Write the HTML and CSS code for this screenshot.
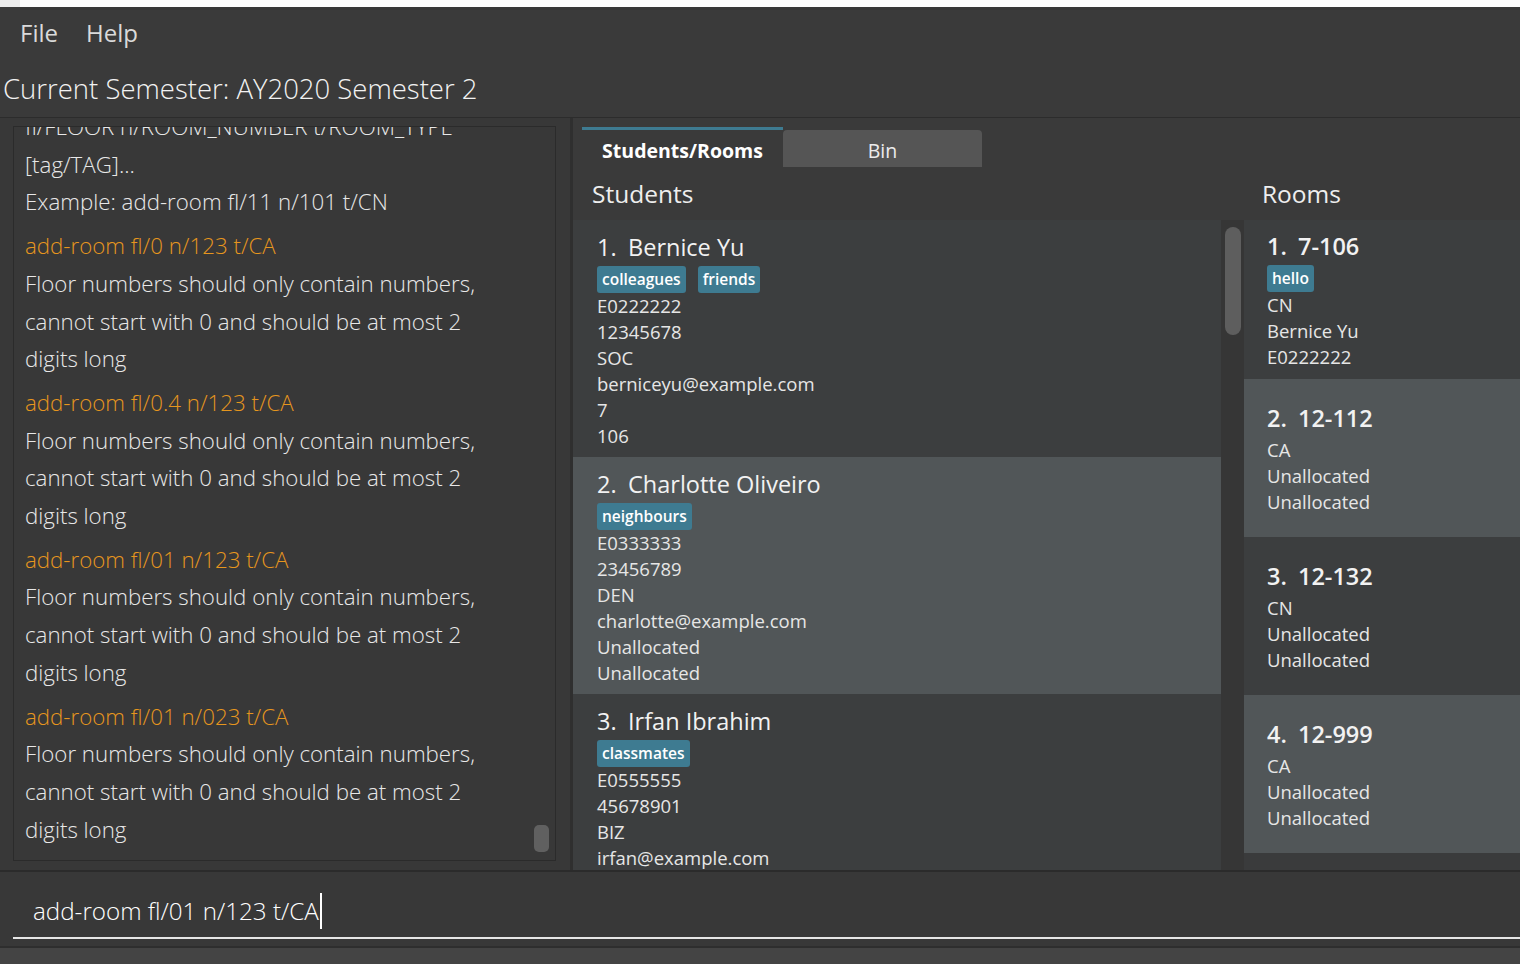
FILE: index.html
```html
<!DOCTYPE html>
<html lang="en">
<head>
<meta charset="utf-8">
<title>Current Semester</title>
<link rel="stylesheet" href="styles.css">
</head>
<body>
<div class="titlebar"><div class="titlebar-icon"></div></div>
<header class="header">
  <nav class="menubar">
    <span class="menu-item">File</span>
    <span class="menu-item">Help</span>
  </nav>
  <div class="semester">Current Semester: AY2020 Semester 2</div>
</header>
<main class="main">
  <section class="left">
    <div class="result-box">
      <div class="result-scroll">
        <div class="msg first">
          <span class="line">fl/FLOOR n/ROOM_NUMBER t/ROOM_TYPE</span>
          <span class="line">[tag/TAG]...</span>
          <span class="line">Example: add-room fl/11 n/101 t/CN</span>
        </div>
        <div class="msg">
          <span class="line cmd">add-room fl/0 n/123 t/CA</span>
          <span class="line">Floor numbers should only contain numbers,</span>
          <span class="line">cannot start with 0 and should be at most 2</span>
          <span class="line">digits long</span>
        </div>
        <div class="msg">
          <span class="line cmd">add-room fl/0.4 n/123 t/CA</span>
          <span class="line">Floor numbers should only contain numbers,</span>
          <span class="line">cannot start with 0 and should be at most 2</span>
          <span class="line">digits long</span>
        </div>
        <div class="msg">
          <span class="line cmd">add-room fl/01 n/123 t/CA</span>
          <span class="line">Floor numbers should only contain numbers,</span>
          <span class="line">cannot start with 0 and should be at most 2</span>
          <span class="line">digits long</span>
        </div>
        <div class="msg">
          <span class="line cmd">add-room fl/01 n/023 t/CA</span>
          <span class="line">Floor numbers should only contain numbers,</span>
          <span class="line">cannot start with 0 and should be at most 2</span>
          <span class="line">digits long</span>
        </div>
      </div>
      <div class="result-thumb"></div>
    </div>
  </section>
  <div class="divider"></div>
  <section class="right">
    <div class="tabbar">
      <div class="tab tab-active">Students/Rooms</div>
      <div class="tab tab-bin">Bin</div>
    </div>
    <div class="panes">
      <div class="students-pane">
        <div class="pane-title">Students</div>
        <div class="students-body">
          <div class="list">
            <article class="card">
              <div class="card-title"><span class="card-id">1.</span><span>Bernice Yu</span></div>
              <div class="tags"><span class="tag">colleagues</span><span class="tag">friends</span></div>
              <div class="field-line">E0222222</div>
              <div class="field-line">12345678</div>
              <div class="field-line">SOC</div>
              <div class="field-line">berniceyu@example.com</div>
              <div class="field-line">7</div>
              <div class="field-line">106</div>
            </article>
            <article class="card">
              <div class="card-title"><span class="card-id">2.</span><span>Charlotte Oliveiro</span></div>
              <div class="tags"><span class="tag">neighbours</span></div>
              <div class="field-line">E0333333</div>
              <div class="field-line">23456789</div>
              <div class="field-line">DEN</div>
              <div class="field-line">charlotte@example.com</div>
              <div class="field-line">Unallocated</div>
              <div class="field-line">Unallocated</div>
            </article>
            <article class="card">
              <div class="card-title"><span class="card-id">3.</span><span>Irfan Ibrahim</span></div>
              <div class="tags"><span class="tag">classmates</span></div>
              <div class="field-line">E0555555</div>
              <div class="field-line">45678901</div>
              <div class="field-line">BIZ</div>
              <div class="field-line">irfan@example.com</div>
            </article>
          </div>
          <div class="track"><div class="thumb"></div></div>
        </div>
      </div>
      <div class="rooms-pane">
        <div class="pane-title rooms-title">Rooms</div>
        <div class="rooms-list">
          <article class="card room-card">
            <div class="card-title room-title"><span class="card-id">1.</span><span>7-106</span></div>
            <div class="tags"><span class="tag">hello</span></div>
            <div class="field-line">CN</div>
            <div class="field-line">Bernice Yu</div>
            <div class="field-line">E0222222</div>
          </article>
          <article class="card room-card">
            <div class="card-title room-title"><span class="card-id">2.</span><span>12-112</span></div>
            <div class="tags"></div>
            <div class="field-line">CA</div>
            <div class="field-line">Unallocated</div>
            <div class="field-line">Unallocated</div>
          </article>
          <article class="card room-card">
            <div class="card-title room-title"><span class="card-id">3.</span><span>12-132</span></div>
            <div class="tags"></div>
            <div class="field-line">CN</div>
            <div class="field-line">Unallocated</div>
            <div class="field-line">Unallocated</div>
          </article>
          <article class="card room-card">
            <div class="card-title room-title"><span class="card-id">4.</span><span>12-999</span></div>
            <div class="tags"></div>
            <div class="field-line">CA</div>
            <div class="field-line">Unallocated</div>
            <div class="field-line">Unallocated</div>
          </article>
        </div>
      </div>
    </div>
  </section>
</main>
<footer class="command">
  <div class="command-field">add-room fl/01 n/123 t/CA<span class="caret"></span></div>
</footer>
<div class="status"></div>
</body>
</html>
```
FILE: styles.css
```css
* { box-sizing: border-box; margin: 0; padding: 0; }
html, body { height: 100%; }
body {
  width: 1520px;
  height: 964px;
  overflow: hidden;
  background: #383838;
  font-family: "Open Sans", "Noto Sans", sans-serif;
  color: #e6e6e6;
  display: flex;
  flex-direction: column;
}
.titlebar { height: 7px; background: #ffffff; display: flex; flex-shrink: 0; }
.titlebar-icon { width: 20px; background: #ececec; }

.header { height: 111px; background: #3a3a3a; border-bottom: 1px solid #2c2c2c; flex-shrink: 0; }
.menubar { height: 55px; display: flex; align-items: center; padding: 0 0 4px 20px; gap: 28px; }
.menu-item { font-size: 24px; color: #dadada; }
.semester { height: 55px; display: flex; align-items: center; padding: 0 0 2px 3px; font-size: 27.5px; font-weight: 300; color: #f2f2f2; }

.main { height: 752px; display: flex; flex-shrink: 0; }
.left { width: 570px; padding: 8px 14px 9px 13px; background: #383838; }
.result-box {
  height: 100%;
  border: 1px solid #2b2b2b;
  background: #383838;
  overflow: hidden;
  position: relative;
  padding: 0 11px;
}
.result-scroll { margin-top: -19px; }
.msg { margin-top: 6px; }
.msg.first { margin-top: 0; }
.line { display: block; white-space: nowrap; font-size: 22.3px; line-height: 37.7px; font-weight: 300; color: #e8e8e8; }
.line.cmd { color: #e6961e; }
.result-thumb { position: absolute; left: 520px; top: 698px; width: 15px; height: 27px; border-radius: 5px; background: #606060; }

.divider { width: 3px; background: #2f2f2f; }
.right { flex: 1; display: flex; flex-direction: column; background: #3a3a3a; min-width: 0; }
.tabbar { height: 52px; display: flex; align-items: flex-start; padding-left: 9px; flex-shrink: 0; }
.tab { display: flex; align-items: center; justify-content: center; font-size: 19.5px; }
.tab-active { width: 201px; height: 43px; margin-top: 9px; border-top: 3px solid #3e7b91; font-weight: 700; color: #ffffff; }
.tab-bin { width: 199px; height: 37px; margin-top: 12px; padding-top: 3px; background: #555555; border-radius: 4px 4px 0 0; color: #ececec; }

.panes { flex: 1; display: flex; min-height: 0; }
.students-pane { width: 671px; display: flex; flex-direction: column; }
.pane-title { height: 50px; display: flex; align-items: center; padding: 0 0 3px 19px; font-size: 24.5px; color: #eeeeee; flex-shrink: 0; }
.students-body { flex: 1; display: flex; min-height: 0; overflow: hidden; }
.list { flex: 1; overflow: hidden; }
.track { width: 23px; background: #363636; padding: 7px 3px 0 4px; }
.thumb { height: 108px; border-radius: 8px; background: #5e5e5e; }

.card { padding: 12px 0 8px 24px; color: #e6e6e6; }
.card:nth-child(odd) { background: #3c3e3f; }
.card:nth-child(even) { background: #515658; }
.card-title { display: flex; font-size: 23.5px; line-height: 30px; color: #f2f2f2; }
.card-id { width: 31px; flex-shrink: 0; }
.tags { display: flex; gap: 12px; margin-top: 4px; }
.tag { height: 27px; line-height: 27px; padding: 0 5px; background: #3e7b91; border-radius: 3px; color: #ffffff; font-size: 15.5px; font-weight: 600; }
.field-line { font-size: 18.5px; line-height: 26px; }

.rooms-pane { flex: 1; display: flex; flex-direction: column; min-width: 0; }
.rooms-title { padding-left: 18px; }
.rooms-list { flex: 1; background: #3a3b3c; overflow: hidden; }
.room-card { min-height: 158px; padding: 11px 0 9px 23px; display: flex; flex-direction: column; justify-content: center; }
.room-title { font-weight: 600; }

.command {
  height: 78px;
  flex-shrink: 0;
  background: #383838;
  border-top: 2px solid #2b2b2b;
  border-bottom: 2px solid #2e2e2e;
  padding: 0 0 7px 13px;
}
.command-field {
  height: 67px;
  border-bottom: 2px solid #e6e6e6;
  display: flex;
  align-items: center;
  padding: 12px 0 0 20px;
  font-size: 24.2px;
  font-weight: 300;
  color: #ffffff;
  white-space: pre;
}
.caret { display: inline-block; width: 2px; height: 36px; background: #ffffff; margin-left: 1px; }
.status { height: 16px; background: #444444; flex-shrink: 0; }
```
